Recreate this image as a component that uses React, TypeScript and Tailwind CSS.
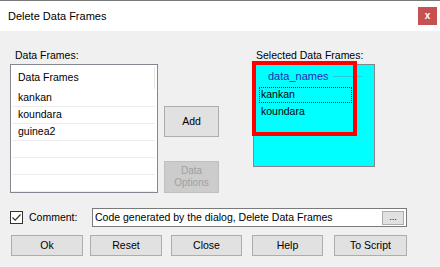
import React from 'react';

const font = { fontFamily: '"Liberation Sans", Arial, sans-serif' };

function WinButton({ label, className }: { label: string; className: string }) {
  return (
    <div
      className={`h-[21px] bg-[#e1e1e1] border border-[#adadad] flex items-center justify-center text-[10.5px] text-black ${className}`}
    >
      {label}
    </div>
  );
}

export default function App() {
  const frames = ['kankan', 'koundara', 'guinea2', '', '', ''];

  return (
    <div className="w-[440px] h-[267px] bg-[#f0f0f0] overflow-hidden flex flex-col" style={font}>
      {/* Title bar */}
      <div className="h-[31px] bg-white border-t border-[#7a7a7a] flex items-center justify-between pl-[8px] pr-[3px] shrink-0">
        <span className="text-[11px] text-black">Delete Data Frames</span>
        <div className="w-[19px] h-[18px] bg-[#c75050] flex items-center justify-center text-white text-[10px] font-bold leading-none">
          x
        </div>
      </div>

      {/* Lists */}
      <div className="flex pl-[10px] pt-[17px]">
        <div className="w-[148px] flex flex-col">
          <div className="h-[16px] pl-[5px] text-[10.5px] leading-[14px] text-black">Data Frames:</div>
          <div className="h-[129px] bg-white border border-[#828790] flex flex-col px-[1px]">
            <div className="h-[25px] flex items-center justify-between pl-[6px] shrink-0">
              <span className="text-[10.5px] text-black">Data Frames</span>
              <div className="w-px h-[22px] bg-[#e5e5e5] mr-[1px]" />
            </div>
            {frames.map((f, i) => (
              <div
                key={i}
                className="h-[17px] border-b border-[#ececec] pl-[6px] mr-[1px] flex items-center text-[10.5px] text-black shrink-0"
              >
                {f}
              </div>
            ))}
          </div>
        </div>

        <div className="w-[55px] ml-[6px] flex flex-col">
          <div className="mt-[58px] h-[31px] bg-[#e1e1e1] border border-[#adadad] flex items-center justify-center text-[10.5px] text-black">
            Add
          </div>
          <div className="mt-[24px] h-[32px] bg-[#cccccc] border border-[#bfbfbf] flex flex-col items-center justify-center text-[10px] leading-[12px] text-[#a0a0a0]">
            <span>Data</span>
            <span>Options</span>
          </div>
        </div>

        <div className="ml-[34px] w-[122px] flex flex-col">
          <div className="h-[16px] pl-[3px] text-[10.5px] leading-[14px] text-black">Selected Data Frames:</div>
          <div className="relative h-[103px] bg-[#00ffff] border border-[#828790] flex flex-col">
            <div className="h-[22px] flex items-center pl-[14px] shrink-0">
              <span className="text-[11px] text-[#2a2ab0]">data_names</span>
              <div className="ml-[4px] w-[29px] h-px bg-[#30c8d8]" />
            </div>
            <div className="ml-[5px] w-[93px] h-[16px] border border-dotted border-[#333333] pl-[1px] flex items-center text-[10.5px] text-black">
              kankan
            </div>
            <div className="ml-[5px] h-[17px] pl-[2px] flex items-center text-[10.5px] text-black">koundara</div>
            {/* red annotation */}
            <div className="absolute left-[-2px] top-[-4px] w-[105px] h-[75px] border-[4px] border-[#ff0000]" />
          </div>
        </div>
      </div>

      {/* Comment */}
      <div className="flex items-center pl-[10px] mt-[15px] h-[19px]">
        <div className="w-[82px] flex items-center">
          <div className="w-[13px] h-[13px] bg-white border border-[#333333] flex items-center justify-center">
            <svg width="11" height="11" viewBox="0 0 11 11">
              <path d="M1.5 5.5 L4.2 8.2 L9.5 2.5" fill="none" stroke="#333333" strokeWidth="1.2" />
            </svg>
          </div>
          <span className="ml-[6px] text-[10.5px] text-black">Comment:</span>
        </div>
        <div className="w-[315px] h-[19px] bg-white border border-[#7a7a7a] flex items-center justify-between pl-[2px] pr-[2px]">
          <span className="text-[10.5px] text-black whitespace-nowrap">Code generated by the dialog, Delete Data Frames</span>
          <div className="w-[22px] h-[14px] bg-[#e1e1e1] border border-[#adadad] flex items-center justify-center text-[9px] leading-none text-black">
            ...
          </div>
        </div>
      </div>

      {/* Buttons */}
      <div className="flex mt-[8px]">
        <WinButton label="Ok" className="ml-[11px] w-[72px]" />
        <WinButton label="Reset" className="ml-[7px] w-[72px]" />
        <WinButton label="Close" className="ml-[9px] w-[71px]" />
        <WinButton label="Help" className="ml-[10px] w-[71px]" />
        <WinButton label="To Script" className="ml-[11px] w-[73px]" />
      </div>
    </div>
  );
}
